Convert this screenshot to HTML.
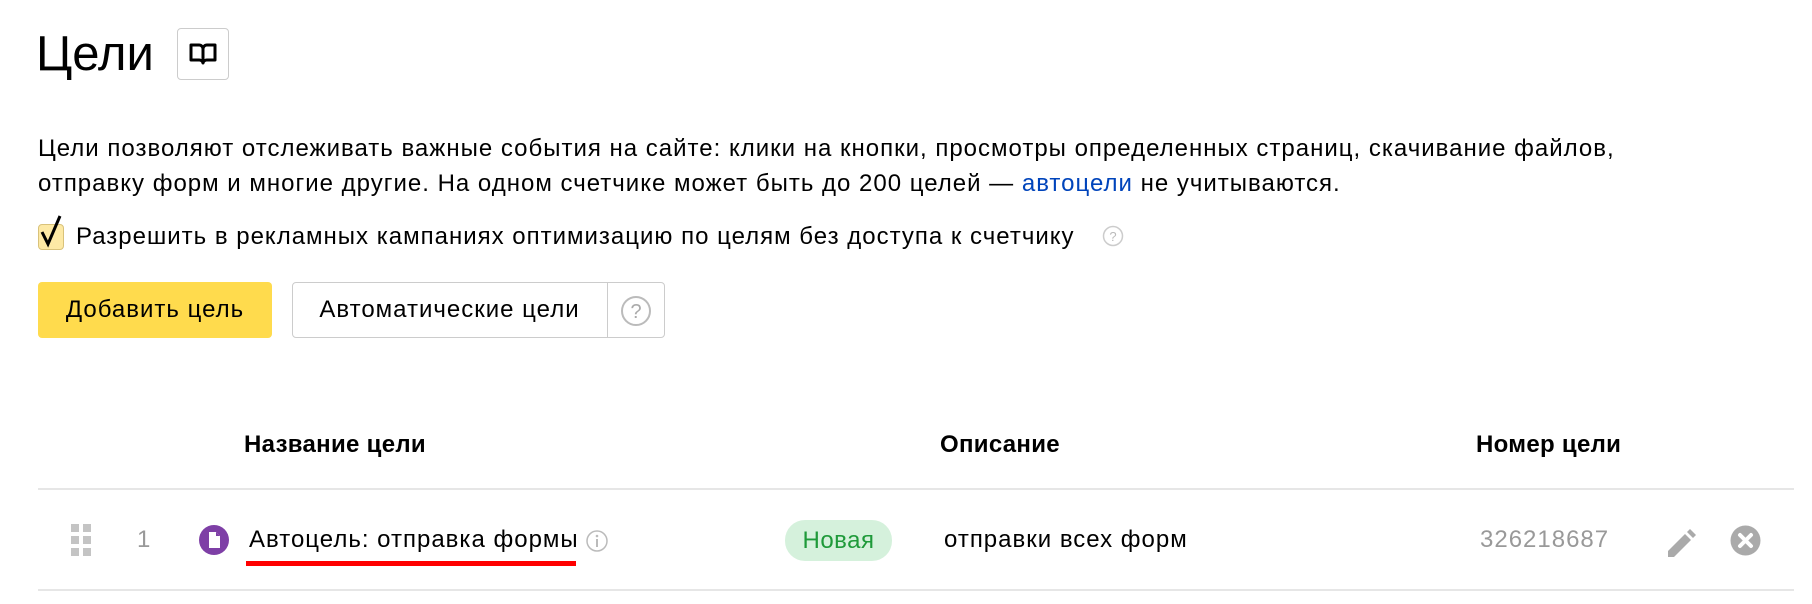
<!DOCTYPE html>
<html><head><meta charset="utf-8"><style>
body{margin:0;width:1812px;height:604px;background:#fff;font-family:"Liberation Sans",sans-serif;color:#000;position:relative;overflow:hidden}
.a{position:absolute;white-space:nowrap}
.t{font-size:24px;letter-spacing:1px}
.b{font-size:24px;font-weight:bold;letter-spacing:0.3px;line-height:30px}
</style></head><body>
<div class="a" style="left:36px;top:24px;font-size:49px;line-height:60px">Цели</div>
<div class="a" style="left:177px;top:28px;width:52px;height:52px;border:1px solid #ccc;border-radius:4px;box-sizing:border-box">
<svg width="50" height="50" viewBox="0 0 50 50" style="position:absolute;left:0;top:0"><path d="M13 16h8a4 4 0 0 1 4 4v14a4 4 0 0 0-4-3h-8zM37 16h-8a4 4 0 0 0-4 4v14a4 4 0 0 1 4-3h8z" fill="none" stroke="#000" stroke-width="3" stroke-linejoin="round"/></svg></div>
<div class="a t" style="left:38px;top:131px;line-height:35px">Цели позволяют отслеживать важные события на сайте: клики на кнопки, просмотры определенных страниц, скачивание файлов,<br>отправку форм и многие другие. На одном счетчике может быть до 200 целей — <span style="color:#04b">автоцели</span> не учитываются.</div>
<div class="a" style="left:38px;top:224px;width:26px;height:26px;background:#fde9a5;border:1px solid #d9c27a;border-radius:4px;box-sizing:border-box"></div>
<svg class="a" style="left:36px;top:212px" width="40" height="40"><path d="M6 20l6 12L24 4" fill="none" stroke="#000" stroke-width="3"/></svg>
<div class="a t" style="left:76px;top:222px;line-height:30px">Разрешить в рекламных кампаниях оптимизацию по целям без доступа к счетчику</div>
<svg class="a" style="left:1102px;top:225px" width="22" height="22"><circle cx="11" cy="11" r="9.5" fill="none" stroke="#ccc" stroke-width="1.5"/><text x="11" y="16" font-size="13" text-anchor="middle" fill="#bbb" font-family="Liberation Sans">?</text></svg>
<div class="a t" style="left:38px;top:282px;width:234px;height:56px;background:#ffdb4d;border-radius:4px;line-height:56px;text-align:center">Добавить цель</div>
<div class="a" style="left:292px;top:282px;width:373px;height:56px;border:1.5px solid #ccc;border-radius:4px;box-sizing:border-box"></div>
<div class="a" style="left:607px;top:283px;width:1px;height:54px;background:#ccc"></div>
<div class="a t" style="left:292px;top:282px;width:315px;line-height:56px;text-align:center">Автоматические цели</div>
<svg class="a" style="left:620px;top:295px" width="32" height="32"><circle cx="16" cy="16" r="14" fill="none" stroke="#bbb" stroke-width="2"/><text x="16" y="23" font-size="20" text-anchor="middle" fill="#aaa" font-family="Liberation Sans">?</text></svg>
<div class="a b" style="left:244px;top:430px">Название цели</div>
<div class="a b" style="left:940px;top:430px">Описание</div>
<div class="a b" style="left:1476px;top:430px">Номер цели</div>
<div class="a" style="left:38px;top:488px;width:1756px;height:2px;background:#e6e6e6"></div>
<svg class="a" style="left:71px;top:524px" width="22" height="32" fill="#c4c4c4"><rect x="0" y="0" width="8" height="8"/><rect x="12" y="0" width="8" height="8"/><rect x="0" y="12" width="8" height="8"/><rect x="12" y="12" width="8" height="8"/><rect x="0" y="24" width="8" height="8"/><rect x="12" y="24" width="8" height="8"/></svg>
<div class="a t" style="left:137px;top:525px;line-height:30px;color:#999">1</div>
<svg class="a" style="left:198px;top:524px" width="32" height="32"><circle cx="16" cy="16" r="15" fill="#7e3fa6"/><path d="M11 8h7l4 4v12h-11z" fill="#fff"/><path d="M18 8v4h4" fill="#7e3fa6"/></svg>
<div class="a t" style="left:249px;top:525px;line-height:30px">Автоцель: отправка формы</div>
<svg class="a" style="left:585px;top:529px" width="24" height="24"><circle cx="12" cy="12" r="10" fill="none" stroke="#bbb" stroke-width="1.5"/><rect x="11" y="10" width="2" height="8" fill="#bbb"/><circle cx="12" cy="7" r="1.3" fill="#bbb"/></svg>
<div class="a" style="left:246px;top:561px;width:330px;height:5px;background:#f00"></div>
<div class="a t" style="left:785px;top:520px;width:107px;height:41px;border-radius:20px;background:#d5f1dc;color:#1f9a3a;line-height:41px;text-align:center;letter-spacing:0.5px">Новая</div>
<div class="a t" style="left:944px;top:525px;line-height:30px">отправки всех форм</div>
<div class="a t" style="left:1480px;top:525px;line-height:30px;color:#999">326218687</div>
<svg class="a" style="left:1665px;top:526px" width="34" height="34" fill="#aaa"><path d="M3 25l17-17 6 6-17 17H3z"/><path d="M22 6l3-3 6 6-3 3z"/></svg>
<svg class="a" style="left:1730px;top:525px" width="31" height="31"><circle cx="15.5" cy="15.5" r="15" fill="#aaa"/><path d="M10 10l11 11M21 10l-11 11" stroke="#fff" stroke-width="4" stroke-linecap="round"/></svg>
<div class="a" style="left:38px;top:589px;width:1756px;height:2px;background:#e6e6e6"></div>
</body></html>
